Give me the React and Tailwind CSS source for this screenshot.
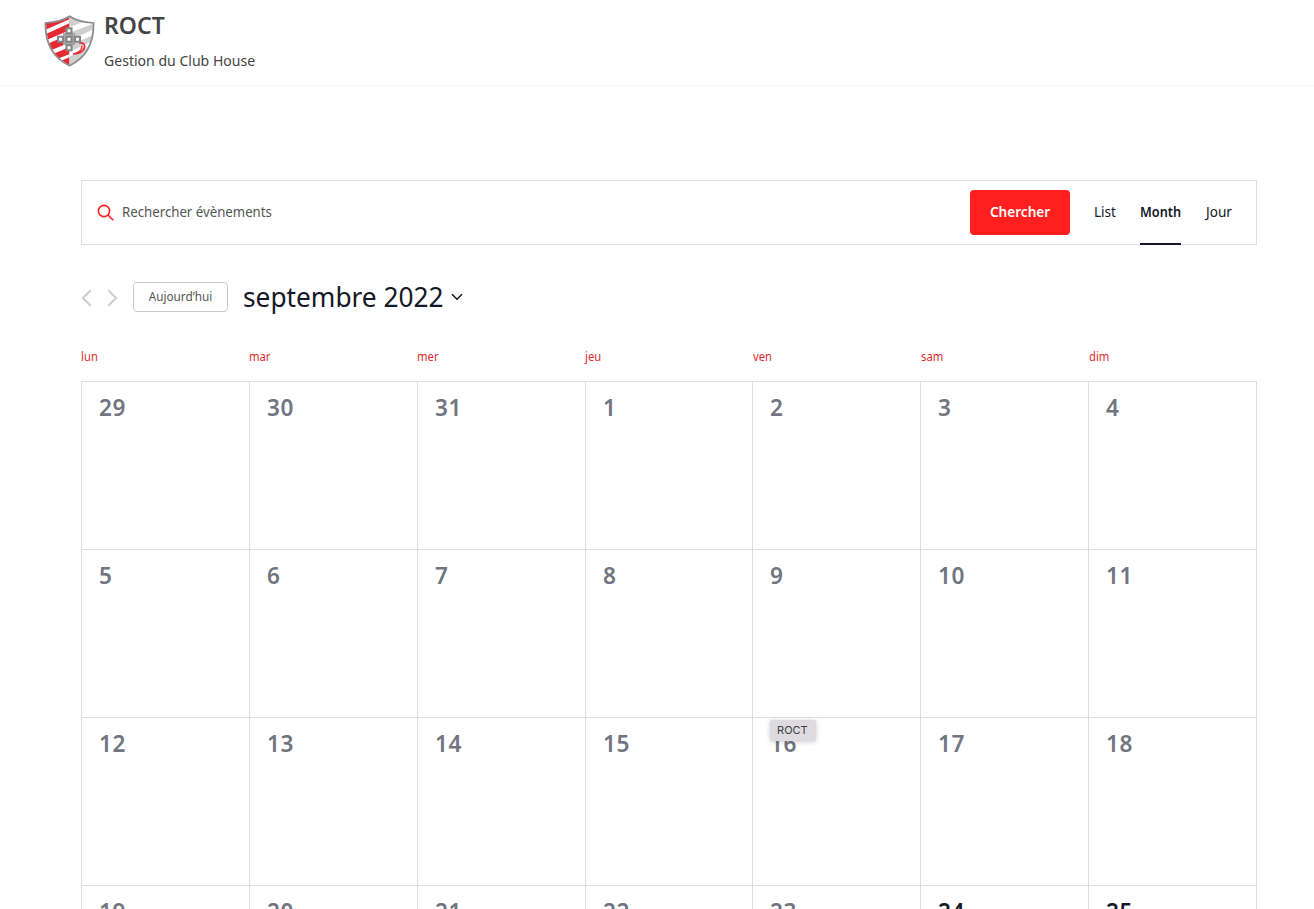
import React from 'react';

const DAYS = ['lun', 'mar', 'mer', 'jeu', 'ven', 'sam', 'dim'];
const WEEKS = [
  [29, 30, 31, 1, 2, 3, 4],
  [5, 6, 7, 8, 9, 10, 11],
  [12, 13, 14, 15, 16, 17, 18],
  [19, 20, 21, 22, 23, 24, 25],
];

function Shield() {
  return (
    <svg className="block h-[52px] w-[51px] shrink-0" viewBox="0 0 51 52">
      <defs>
        <clipPath id="left"><path d="M25.5 2 Q17 7 2 8 Q2 39 25.5 50Z" /></clipPath>
        <clipPath id="right"><path d="M25.5 2 Q34 7 49 8 Q49 39 25.5 50Z" /></clipPath>
      </defs>
      <g clipPath="url(#left)">
        <path fill="#e52a34" d="M0 0h26v52H0z" />
        <path fill="#fff" d="M0 15.500L26 4v4L0 20zM0 26L26 15v4L0 30.500zM0 38L26 27.500v4.500L0 42.500zM9 45.500L26 39v3L12 48z" />
      </g>
      <g clipPath="url(#right)">
        <path fill="#cfcfcf" d="M25 0h26v52H25z" />
        <path fill="#fff" d="M25 12L51 3v5L25 18zM25 25L51 14v5L25 31zM25 37L51 25v4L25 42z" />
      </g>
      <path fill="none" stroke="#8a8a8a" strokeWidth="1.7" d="M25.5 1.3Q34 7 49.6 8Q50 39 25.5 50.7Q1 39 1.4 8Q17 7 25.5 1.3Z" />
      <path fill="none" stroke="#e52a34" strokeWidth="1.6" d="M35 28c6-1 7 4 4 7-2 3-6 4-10 4 5-1 9-4 9-8" />
      <path fill="#a5a5a5" d="M19 18h12v12H19z" />
      <g fill="#fff" stroke="#858585" strokeWidth="2.100">
        <path d="M22.500 13.200h5v5h-5zM14 21.700h5v5h-5zM22.500 21.700h5v5h-5zM31 21.700h5v5h-5zM22.500 30.200h5v5h-5z" />
      </g>
    </svg>
  );
}

export default function App() {
  return (
    <div className="h-[909px] overflow-hidden bg-white font-['Noto_Sans',sans-serif]">
      <header className="flex h-[86px] items-start border-b border-[#f6f6f6] pt-[15px] pl-[44px] text-[#444]">
        <Shield />
        <div className="-mt-[8px] ml-[9px]">
          <h1 className="text-[24px] leading-[36px] font-semibold whitespace-nowrap"><span className="inline-block origin-left scale-x-[96%]">ROCT</span></h1>
          <p className="mt-[4px] text-[15px] leading-[26px] whitespace-nowrap"><span className="inline-block origin-left scale-x-[93.7%]">Gestion du Club House</span></p>
        </div>
      </header>

      <main className="ml-[81px] w-[1176px] pt-[94px]">
        <div className="flex h-[65px] items-stretch border border-[#dedede]">
          <div className="flex flex-1 items-center pl-[15px] text-[14px] text-[#555]">
            <svg className="mr-[8px] size-[17px]" viewBox="0 0 17 17" fill="none" stroke="#ff1f1f" strokeWidth="1.6"><circle cx="7" cy="7" r="5.6" /><path d="M11 11l5.3 5.3" /></svg>
            <span className="-mt-[2px] inline-block origin-left scale-x-[94.5%]">Rechercher évènements</span>
          </div>
          <button className="mt-[9px] h-[45px] w-[100px] rounded-[4px] bg-[#ff1f1f] pb-[2px] text-[14px] font-semibold text-white"><span className="inline-block scale-x-[97%]">Chercher</span></button>
          <nav className="ml-[24px] flex gap-[24px] pr-[24px] text-[14px] leading-[62px] text-[#141827]">
            <span className="w-[22px] whitespace-nowrap"><span className="inline-block origin-left scale-x-[97%]">List</span></span>
            <span className="h-[64px] w-[41px] border-b-2 border-[#141827] font-semibold whitespace-nowrap"><span className="inline-block origin-left scale-x-[91%]">Month</span></span>
            <span className="w-[27px] pl-[1px] whitespace-nowrap"><span className="inline-block origin-left scale-x-[97%]">Jour</span></span>
          </nav>
        </div>

        <div className="mt-[37px] flex h-[30px] items-center">
          <svg className="mt-[1px] h-[18px] w-[37px]" viewBox="0 0 37 18" fill="none" stroke="#cfcfcf" strokeWidth="2.2"><path d="M9.7 1.2L2 9l7.7 7.8M27.3 1.2L35 9l-7.7 7.8" /></svg>
          <button className="ml-[15px] h-[30px] w-[95px] rounded-[4px] border border-[#cacaca] text-[12px] text-[#555]"><span className="inline-block scale-x-[98%]">Aujourd’hui</span></button>
          <h2 className="ml-[15px] -mt-[2px] w-[201px] text-[28px] leading-[40px] whitespace-nowrap text-[#141827]"><span className="inline-block origin-left scale-x-[93.8%]">septembre 2022</span></h2>
          <svg className="ml-[7px] h-[8px] w-[12px]" viewBox="0 0 12 8" fill="none" stroke="#141827" strokeWidth="1.6"><path d="M1 1.2l5 5 5-5" /></svg>
        </div>

        <div className="mt-[35px] grid h-[34px] grid-cols-7 text-[12px] leading-[20px] text-[#dc2c2c]">
          {DAYS.map((d) => <span key={d}><span className="inline-block origin-left scale-x-[94%]">{d}</span></span>)}
        </div>

        <div className="grid auto-rows-[168px] grid-cols-7 border-t border-l border-[#dedede]">
          {WEEKS.flat().map((n, i) => (
            <div key={i} className={`relative border-r border-b border-[#dedede] pt-[8px] pl-[17px] text-[24px] leading-[34px] font-semibold ${i > 25 ? 'text-[#141827]' : 'text-[#727580]'}`}>
              <span className="inline-block origin-left scale-x-[94%] tracking-[0.6px]">{n}</span>
              {n === 16 && (
                <div className="absolute top-[2px] left-[17px] flex h-[21px] w-[46px] items-center justify-center rounded-[2px] bg-[#dedbe0] pr-[2px] text-[11px] leading-none font-normal text-[#3c3c3c] shadow-[0_1px_5px_rgba(0,0,0,0.2)] font-['Inter',sans-serif]">ROCT</div>
              )}
            </div>
          ))}
        </div>
      </main>
    </div>
  );
}
